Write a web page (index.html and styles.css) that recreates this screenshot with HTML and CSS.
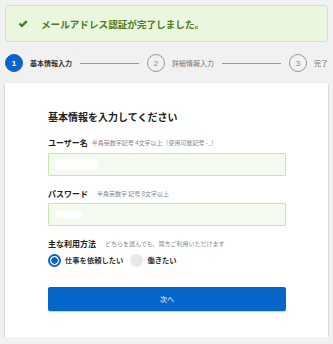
FILE: index.html
```html
<!DOCTYPE html>
<html lang="ja">
<head>
<meta charset="utf-8">
<title>基本情報入力</title>
<link rel="stylesheet" href="styles.css">
</head>
<body>
<div class="page">
  <div class="banner">
    <svg class="check" width="10" height="8" viewBox="0 0 10 8"><path d="M0.6 4.3 L2.3 2.7 L3.9 4.3 L7.9 0.3 L9.6 2 L3.9 7.6 Z" fill="#4b7d22"/></svg>
    <span class="banner-text">メールアドレス認証が完了しました。</span>
  </div>

  <div class="stepper">
    <span class="step-num active">1</span>
    <span class="step-label active">基本情報入力</span>
    <span class="step-line"></span>
    <span class="step-num">2</span>
    <span class="step-label">詳細情報入力</span>
    <span class="step-line"></span>
    <span class="step-num">3</span>
    <span class="step-label">完了</span>
  </div>

  <div class="card">
    <h1 class="title">基本情報を入力してください</h1>

    <div class="label-row first">
      <span class="label">ユーザー名</span>
      <span class="hint hint-tight">半角英数字記号 4文字以上（使用可能記号 -_）</span>
    </div>
    <div class="input input-tight"><span class="mask mask-user"></span></div>

    <div class="label-row">
      <span class="label">パスワード</span>
      <span class="hint">半角英数字 記号 8文字以上</span>
    </div>
    <div class="input"><span class="mask mask-pass"></span></div>

    <div class="label-row">
      <span class="label">主な利用方法</span>
      <span class="hint">どちらを選んでも、両方ご利用いただけます</span>
    </div>
    <div class="radios">
      <span class="radio checked"></span>
      <span class="radio-label">仕事を依頼したい</span>
      <span class="radio off"></span>
      <span class="radio-label">働きたい</span>
    </div>

    <div class="button">次へ</div>
  </div>
</div>
</body>
</html>
```

FILE: styles.css
```css
html, body {
  margin: 0;
  padding: 0;
  background: #f1f1f1;
  font-family: "Noto Sans CJK JP", "Noto Sans", sans-serif;
  color: #222;
}

.page {
  padding: 5px 5px 0 5px;
}

.banner {
  box-sizing: border-box;
  height: 37px;
  display: flex;
  align-items: center;
  padding-left: 12px;
  background: #eaf6dd;
  border: 1px solid #cde5b7;
  border-radius: 3px;
}

.check {
  display: block;
  margin-right: 13px;
}

.banner-text {
  font-size: 9.6px;
  font-weight: bold;
  color: #4b7d22;
  line-height: 14px;
}

.stepper {
  margin-top: 12px;
  height: 18px;
  display: flex;
  align-items: center;
}

.step-num {
  box-sizing: border-box;
  width: 18px;
  height: 18px;
  border-radius: 50%;
  border: 1px solid #9a9a9a;
  color: #888;
  font-family: "Liberation Sans", sans-serif;
  font-size: 8px;
  display: flex;
  align-items: center;
  justify-content: center;
  flex: none;
}

.step-num.active {
  background: #0b62c8;
  border-color: #0b62c8;
  color: #fff;
  font-weight: bold;
}

.step-label {
  margin-left: 7px;
  font-size: 7px;
  color: #777;
  white-space: nowrap;
}

.step-label.active {
  font-weight: bold;
  color: #333;
}

.step-line {
  flex: 1;
  height: 1px;
  background: #9a9a9a;
  margin: 0 8px;
}

.card {
  margin-top: 11px;
  background: #fff;
  box-shadow: 0 1px 2px rgba(0, 0, 0, 0.28);
  padding: 25px 42px 26px 43px;
}

.title {
  margin: 0;
  font-size: 10px;
  font-weight: bold;
  line-height: 18px;
  color: #222;
}

.label-row {
  margin-top: 10px;
  height: 14px;
  display: flex;
  align-items: center;
  white-space: nowrap;
}

.label-row.first {
  margin-top: 9px;
}

.label {
  font-size: 8px;
  font-weight: bold;
  color: #222;
}

.hint {
  margin-left: 9px;
  font-size: 6px;
  color: #888;
}

.hint-tight {
  margin-left: 4px;
}

.input {
  box-sizing: border-box;
  margin-top: 3px;
  height: 23px;
  background: #f4fbee;
  border: 1px solid #c7e6ae;
  border-radius: 1px;
  display: flex;
  align-items: center;
  padding-left: 7px;
}

.input-tight {
  margin-top: 4px;
}

.mask {
  display: block;
  height: 7px;
  background: #ffffff;
  border-radius: 3px;
  box-shadow: 0 0 2px 1px rgba(255, 255, 255, 0.9);
}

.mask-user {
  width: 42px;
  height: 8px;
}

.mask-pass {
  width: 24px;
  height: 5px;
  margin-left: 1px;
}

.radios {
  margin-top: 3px;
  height: 14px;
  display: flex;
  align-items: center;
}

.radio {
  box-sizing: border-box;
  width: 13px;
  height: 13px;
  border-radius: 50%;
  flex: none;
}

.radio.checked {
  border: 2px solid #0b62c8;
  background: radial-gradient(circle, #0b62c8 0 3px, #fff 3.5px);
}

.radio.off {
  background: #e8e8e8;
  margin-left: 7px;
}

.radio-label {
  margin-left: 4px;
  font-size: 7.3px;
  font-weight: bold;
  color: #333;
}

.button {
  margin-top: 20px;
  height: 24px;
  background: #0565c8;
  border-radius: 2px;
  box-shadow: 0 1px 1px rgba(0, 0, 0, 0.2);
  color: #fff;
  font-size: 7px;
  display: flex;
  align-items: center;
  justify-content: center;
}
```
